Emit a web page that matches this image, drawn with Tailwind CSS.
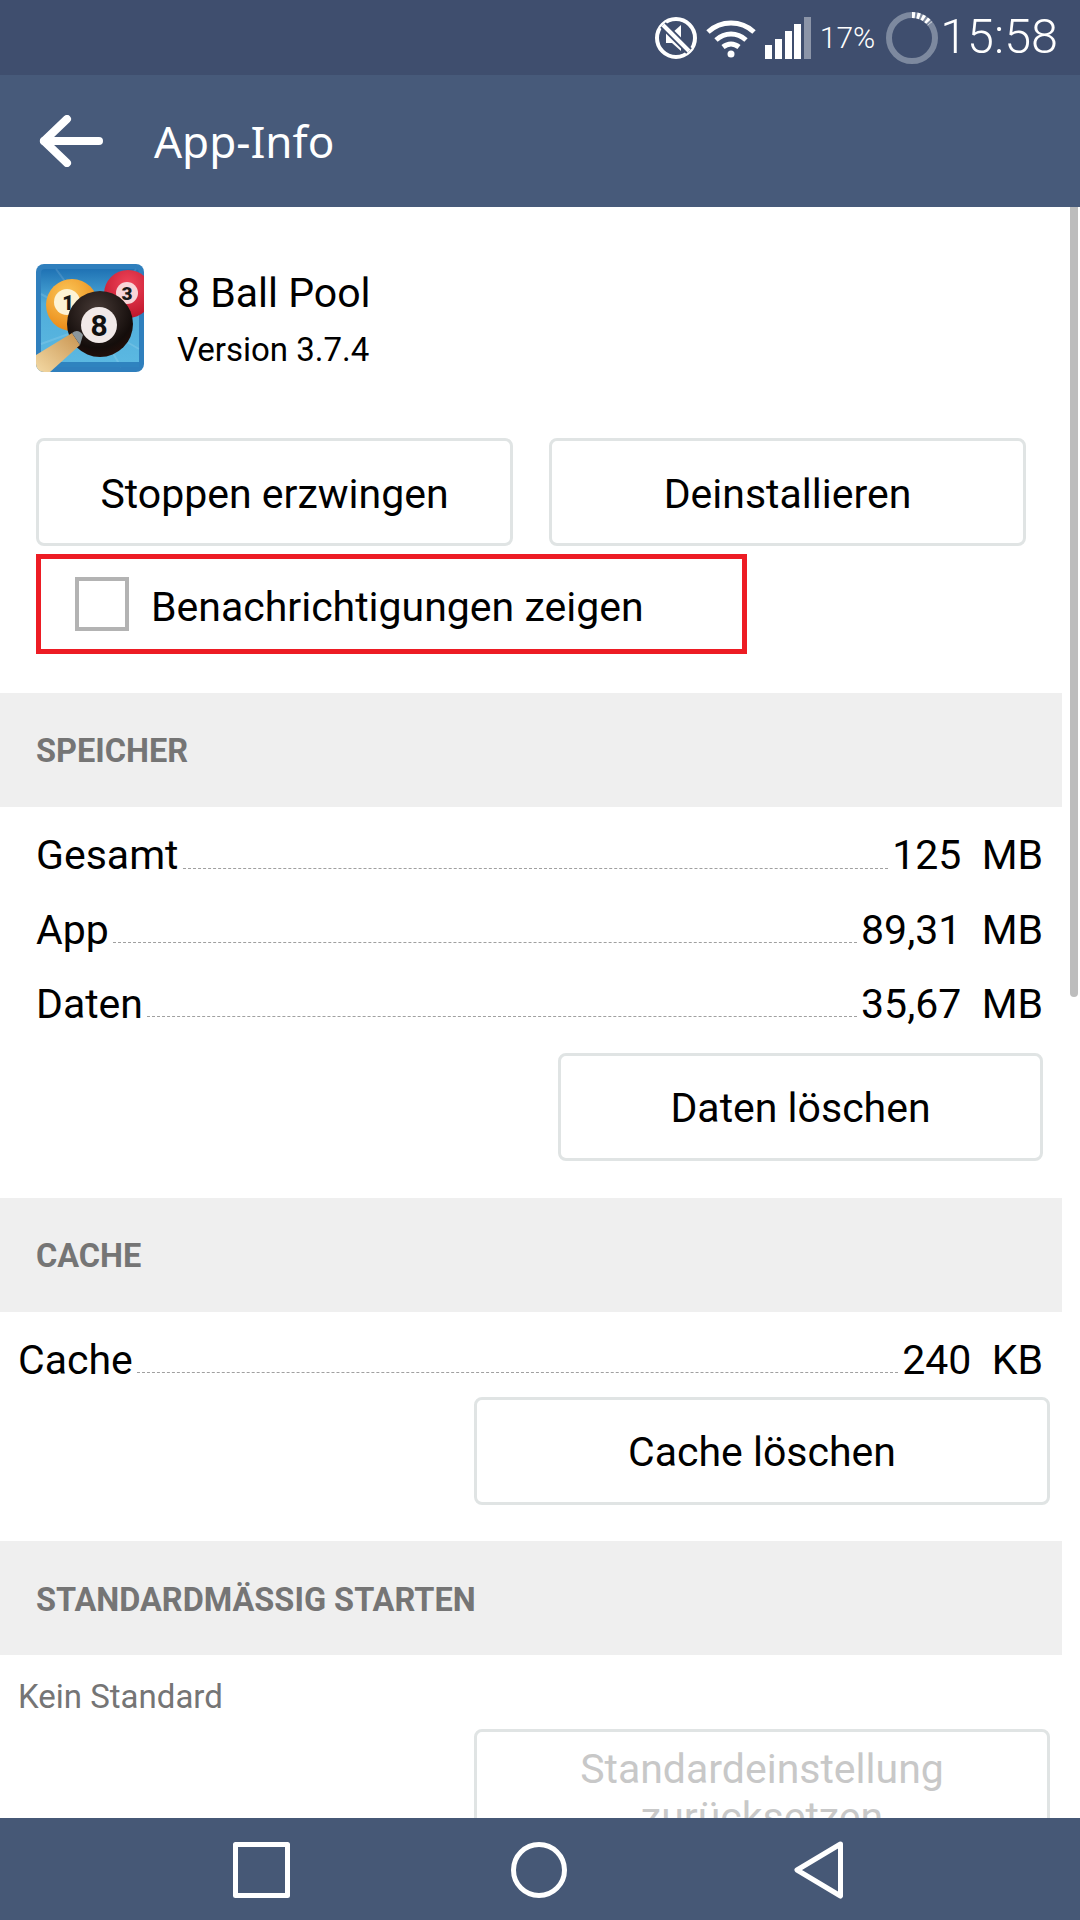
<!DOCTYPE html>
<html lang="de">

<head>
    <meta charset="UTF-8">
    <meta name="viewport" content="width=device-width, initial-scale=1.0">
    <title>App-Info</title>
    <script src="https://cdn.jsdelivr.net/npm/@tailwindcss/browser@4"></script>
</head>

<body class="bg-white">
    <div class="w-[1080px] h-[1920px] flex flex-col overflow-hidden font-['Roboto',sans-serif] text-black">

        <!-- status bar -->
        <div class="h-[75px] shrink-0 bg-[#3f4e6e] flex items-center justify-end text-white pr-[22px]">
            <svg class="w-[44px] h-[44px] mr-[8px]" viewBox="0 0 44 44" fill="none">
                <circle cx="22" cy="22" r="19" stroke="white" stroke-width="4" />
                <path d="M12 17h6l9-8v26l-9-8h-6z" fill="white" />
                <path d="M9 9l26 26" stroke="#3f4e6e" stroke-width="8" />
                <path d="M9 9l26 26" stroke="white" stroke-width="4" />
            </svg>
            <svg class="w-[50px] h-[40px] mr-[9px]" viewBox="0 0 50 40" fill="none" stroke="white" stroke-width="5">
                <path d="M2 14c13-12 33-12 46 0" />
                <path d="M10 22c9-8 21-8 30 0" />
                <path d="M17 29c5-4 11-4 16 0" />
                <circle cx="25" cy="36" r="3.500" fill="white" stroke="none" />
            </svg>
            <svg class="w-[46px] h-[42px] mr-[9px]" viewBox="0 0 46 42">
                <rect x="0" y="28" width="7" height="14" fill="white" />
                <rect x="10" y="22" width="7" height="20" fill="white" />
                <rect x="20" y="14" width="7" height="28" fill="white" />
                <rect x="29" y="7" width="7" height="35" fill="white" />
                <rect x="39" y="0" width="7" height="42" fill="#8c95a8" />
            </svg>
            <span class="text-[30px] font-light mr-[11px] leading-none">17%</span>
            <svg class="w-[52px] h-[52px] mr-[2px]" viewBox="0 0 52 52" fill="none">
                <circle cx="26" cy="26" r="23" stroke="#7d899f" stroke-width="6" />
                <path d="M26 3a23 23 0 0 1 18 8.600" stroke="white" stroke-width="6" stroke-dasharray="3 2" />
            </svg>
            <span class="text-[48.500px] font-light leading-none">15:58</span>
        </div>

        <!-- app bar -->
        <div class="h-[132px] shrink-0 bg-[#475a7a] flex items-center text-white">
            <svg class="w-[64px] h-[52px] ml-[39px]" viewBox="0 0 64 52" fill="none" stroke="white" stroke-width="8" stroke-linecap="round" stroke-linejoin="round">
                <path d="M60 26H5" />
                <path d="M28 4L5 26l23 22" />
            </svg>
            <span class="ml-[51px] text-[44px] font-['Noto_Sans',sans-serif] leading-none">App-Info</span>
        </div>

        <!-- content -->
        <div class="relative flex-1 overflow-hidden">
            <div class="absolute right-[2px] top-0 w-[8px] h-[790px] rounded-b bg-[#bdbdbd]"></div>

            <!-- app header -->
            <div class="flex items-center pl-[36px] pt-[57px]">
                <svg class="w-[108px] h-[108px] shrink-0" viewBox="0 0 108 108">
                    <defs>
                        <clipPath id="iconClip">
                            <rect width="108" height="108" rx="8" />
                        </clipPath>
                        <linearGradient id="bg" x1="0" y1="0" x2="0" y2="1">
                            <stop offset="0" stop-color="#1f72b4" />
                            <stop offset="0.35" stop-color="#4facda" />
                            <stop offset="1" stop-color="#5cb9e2" />
                        </linearGradient>
                        <radialGradient id="yellow" cx="0.4" cy="0.3" r="0.8">
                            <stop offset="0" stop-color="#fbc75a" />
                            <stop offset="1" stop-color="#e8820e" />
                        </radialGradient>
                        <radialGradient id="red" cx="0.5" cy="0.3" r="0.8">
                            <stop offset="0" stop-color="#f0455a" />
                            <stop offset="1" stop-color="#b80f25" />
                        </radialGradient>
                        <radialGradient id="black" cx="0.45" cy="0.3" r="0.8">
                            <stop offset="0" stop-color="#473a36" />
                            <stop offset="0.7" stop-color="#140d0b" />
                            <stop offset="1" stop-color="#2b0f0a" />
                        </radialGradient>
                        <linearGradient id="cue" x1="0" y1="1" x2="1" y2="0">
                            <stop offset="0" stop-color="#f3d9a4" />
                            <stop offset="1" stop-color="#c99450" />
                        </linearGradient>
                    </defs>
                    <g clip-path="url(#iconClip)">
                        <rect width="108" height="108" fill="#2f7fbd" />
                        <rect x="5" y="5" width="98" height="98" rx="4" fill="url(#bg)" />
                        <path d="M60 60L20 5M60 60L5 30M60 60L100 5M60 60L5 80M60 60L85 103M60 60L103 85" stroke="white" stroke-opacity="0.12" stroke-width="2" />
                        <path d="M5 98h98v5H5z" fill="#2f83bf" />
                        <circle cx="36" cy="41" r="26" fill="url(#yellow)" />
                        <circle cx="31" cy="38" r="13" fill="#fdf3d5" />
                        <text x="32" y="46" font-family="Roboto" font-weight="900" font-size="20" text-anchor="middle" fill="#1a1a1a">1</text>
                        <circle cx="92" cy="30" r="24" fill="url(#red)" />
                        <circle cx="91" cy="29" r="11" fill="#f8d5d8" />
                        <text x="91" y="36" font-family="Roboto" font-weight="900" font-size="19" text-anchor="middle" fill="#1a1a1a">3</text>
                        <circle cx="64" cy="60" r="33" fill="url(#black)" />
                        <circle cx="63" cy="61" r="18" fill="#f1e9e8" />
                        <text x="63" y="72" font-family="Roboto" font-weight="700" font-size="30" text-anchor="middle" fill="#111">8</text>
                        <path d="M0 91L36 69l8 12-30 27H0z" fill="url(#cue)" />
                        <path d="M36 69q6-5 11 2l-3 10z" fill="#8b969b" />
                    </g>
                </svg>
                <div class="ml-[33px] pt-[4px]">
                    <div class="text-[41px] leading-[46px] mb-[14px]">8 Ball Pool</div>
                    <div class="text-[33px] leading-[40px]">Version 3.7.4</div>
                </div>
            </div>

            <!-- action buttons -->
            <div class="flex gap-[36px] pl-[36px] mt-[66px]">
                <div class="w-[477px] h-[108px] pt-[6px] border-[3px] border-[#e0e4e4] rounded-[8px] flex items-center justify-center text-[41px]">Stoppen erzwingen</div>
                <div class="w-[477px] h-[108px] pt-[6px] border-[3px] border-[#e0e4e4] rounded-[8px] flex items-center justify-center text-[41px]">Deinstallieren</div>
            </div>

            <!-- notifications checkbox -->
            <div class="ml-[36px] mt-[8px] w-[711px] h-[100px] border-[5px] border-[#ed1c24] flex items-center pl-[34px]">
                <div class="w-[54px] h-[54px] border-[4px] border-[#b3b3b3] mr-[22px]"></div>
                <span class="text-[41px] pt-[7px]">Benachrichtigungen zeigen</span>
            </div>

            <!-- speicher -->
            <div class="mt-[39px] w-[1062px] h-[114px] pt-[2px] bg-[#efefef] flex items-center pl-[36px] text-[32.500px] font-bold text-[#757575]">SPEICHER</div>
            <div class="pl-[36px] pr-[37px] pt-[11px]">
                <div class="flex h-[75px] pt-[1px] items-center text-[41px]">
                    <span>Gesamt</span>
                    <span class="flex-1 self-end mb-[24px] mx-[4px] border-b border-dashed border-[#a0a0a0]"></span>
                    <span>125&nbsp; MB</span>
                </div>
                <div class="flex h-[74px] pt-[2px] items-center text-[41px]">
                    <span>App</span>
                    <span class="flex-1 self-end mb-[24px] mx-[4px] border-b border-dashed border-[#a0a0a0]"></span>
                    <span>89,31&nbsp; MB</span>
                </div>
                <div class="flex h-[74px] pt-[2px] items-center text-[41px]">
                    <span>Daten</span>
                    <span class="flex-1 self-end mb-[24px] mx-[4px] border-b border-dashed border-[#a0a0a0]"></span>
                    <span>35,67&nbsp; MB</span>
                </div>
                <div class="flex justify-end mt-[12px]">
                    <div class="w-[485px] h-[108px] pt-[4px] border-[3px] border-[#e0e4e4] rounded-[8px] flex items-center justify-center text-[41px]">Daten löschen</div>
                </div>
            </div>

            <!-- cache -->
            <div class="mt-[37px] w-[1062px] h-[114px] pt-[2px] bg-[#efefef] flex items-center pl-[36px] text-[32.500px] font-bold text-[#757575]">CACHE</div>
            <div class="pl-[18px] pr-[30px] pt-[11px]">
                <div class="flex h-[74px] pt-[2px] items-center text-[41px] pr-[7px]">
                    <span>Cache</span>
                    <span class="flex-1 self-end mb-[24px] mx-[4px] border-b border-dashed border-[#a0a0a0]"></span>
                    <span>240&nbsp; KB</span>
                </div>
                <div class="flex justify-end">
                    <div class="w-[576px] h-[108px] pt-[4px] border-[3px] border-[#e0e4e4] rounded-[8px] flex items-center justify-center text-[41px]">Cache löschen</div>
                </div>
            </div>

            <!-- standard -->
            <div class="mt-[36px] w-[1062px] h-[114px] pt-[4px] bg-[#efefef] flex items-center pl-[36px] text-[32.500px] font-bold text-[#757575]">STANDARDMÄSSIG STARTEN</div>
            <div class="pl-[18px] pr-[30px]">
                <div class="h-[74px] pt-[10px] flex items-center text-[33px] text-[#757575]">Kein Standard</div>
                <div class="flex justify-end">
                    <div class="w-[576px] h-[120px] pt-[8px] border-[3px] border-[#e0e4e4] rounded-[8px] flex items-center justify-center text-center text-[41px] leading-[48px] text-[#c8c8c8]">Standardeinstellung zurücksetzen</div>
                </div>
            </div>
        </div>

        <!-- navigation bar -->
        <div class="h-[102px] shrink-0 bg-[#465876] relative z-10">
            <svg class="w-[1080px] h-[102px]" viewBox="0 0 1080 102" fill="none" stroke="white" stroke-width="5" stroke-linejoin="round">
                <rect x="235.500" y="26.500" width="52" height="51" />
                <circle cx="539" cy="52" r="25.500" />
                <path d="M840.500 26L797 52l43.500 26z" />
            </svg>
        </div>
    </div>
</body>

</html>
